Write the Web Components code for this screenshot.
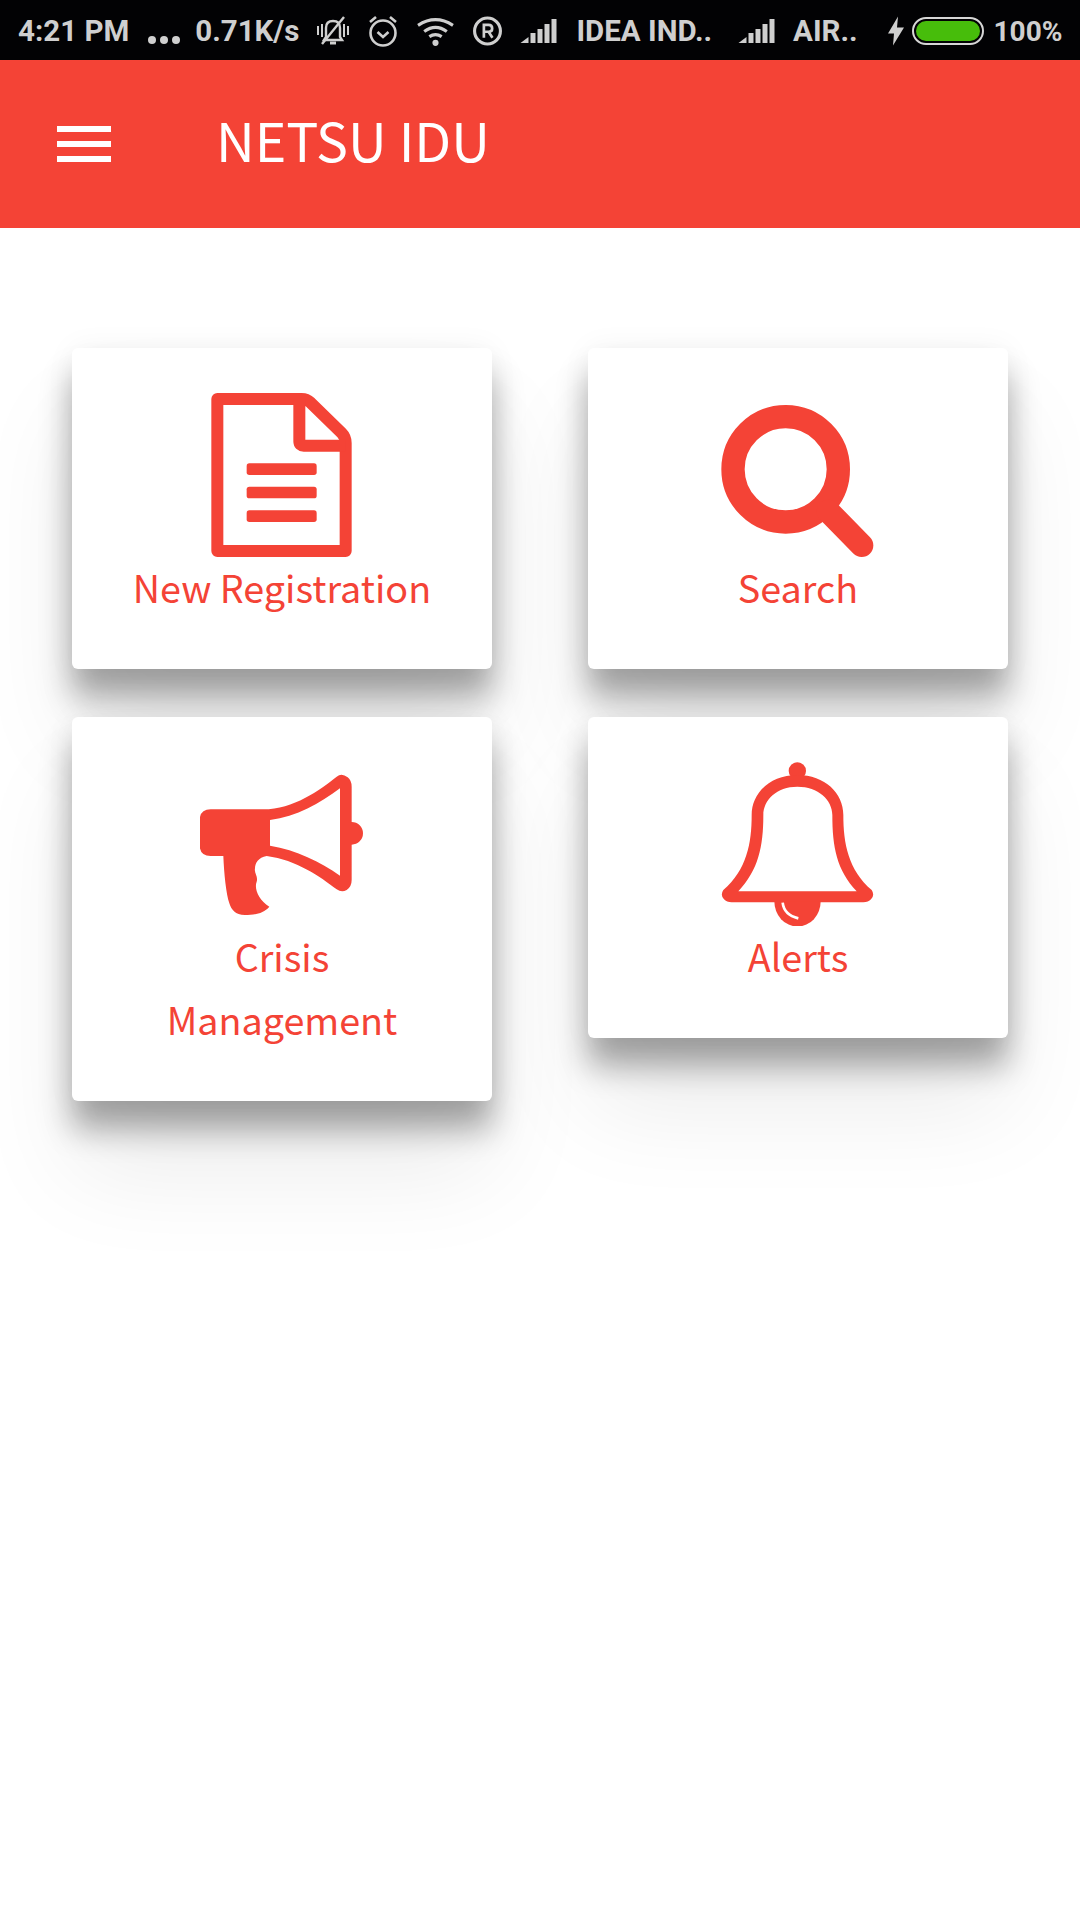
<!DOCTYPE html>
<html>
<head>
<meta charset="utf-8">
<title>Netsu Idu</title>
<style>
  html, body { margin: 0; background: #fff; }
</style>
</head>
<body>
<app-shell>
  <nav-card label="New Registration">
    <svg slot="icon" viewBox="450 190 492 492">
      <path d="M502 208H755Q770 208 782 219L875 310Q887 322 887 340V664H502Z" fill="none" stroke="#f44336" stroke-width="36" stroke-linejoin="round"/>
      <path d="M748 208V335Q748 348 761 348H887" fill="none" stroke="#f44336" stroke-width="36" stroke-linejoin="round"/>
      <rect x="590" y="401" width="210" height="35" rx="8" fill="#f44336"/>
      <rect x="590" y="471" width="210" height="35" rx="8" fill="#f44336"/>
      <rect x="590" y="542" width="210" height="35" rx="8" fill="#f44336"/>
    </svg>
  </nav-card>
  <nav-card label="Search">
    <svg slot="icon" viewBox="438 190 492 492">
      <circle cx="647" cy="419" r="158" fill="none" stroke="#f44336" stroke-width="70"/>
      <path d="M775 545L875 647" stroke="#f44336" stroke-width="70" stroke-linecap="round"/>
    </svg>
  </nav-card>
  <nav-card label="Crisis Management">
    <svg slot="icon" viewBox="450 186 492 492">
      <path fill="#f44336" fill-rule="evenodd" d="M482 328H640C730 328 810 270 860 230Q875 218 893 232Q905 242 905 260V366A34 34 0 0 1 905 434V540Q905 560 890 570Q875 578 860 568C810 530 740 480 650 468C625 472 615 490 615 505C612 520 625 530 620 545C612 565 625 600 658 620C640 642 610 645 585 645C555 645 545 630 538 610C528 580 522 520 520 468H482Q449 468 449 435V362Q449 328 482 328ZM660 360C740 350 810 310 870 265V527C810 485 740 450 660 437Z"/>
    </svg>
  </nav-card>
  <nav-card label="Alerts">
    <svg slot="icon" viewBox="438 186 492 492">
      <circle cx="682" cy="213" r="26" fill="#f44336"/>
      <path fill="#f44336" fill-rule="evenodd" d="M682 225C600 225 545 280 545 345C545 430 530 510 460 570Q450 585 462 598Q470 607 485 607H880Q895 607 903 598Q915 585 905 570C835 510 820 430 820 345C820 280 765 225 682 225ZM682 260C620 260 580 300 580 345C580 440 565 510 505 574H860C800 510 787 440 787 345C787 300 745 260 682 260Z"/>
      <path fill="#f44336" d="M613 604A69 75 0 0 0 752 604Z"/>
      <path d="M638 608Q642 645 685 655" fill="none" stroke="#fff" stroke-width="8"/>
    </svg>
  </nav-card>
</app-shell>

<script>
class StatusBar extends HTMLElement {
  constructor() {
    super();
    const shadow = this.attachShadow({ mode: 'open' });
    shadow.innerHTML = `
      <style>
        :host {
          display: flex;
          align-items: center;
          box-sizing: border-box;
          height: 60px;
          padding: 2px 0 0 18px;
          background: #020204;
          color: #cfcfcf;
          font: 700 29.5px Roboto, "Liberation Sans", sans-serif;
          white-space: nowrap;
        }
        svg { display: block; flex: none; }
        .pct { font-size: 28px; }
      </style>
      <span>4:21 PM</span>
      <svg style="margin:17px 0 0 19px" width="32" height="10" viewBox="0 0 32 10" fill="#cfcfcf">
        <circle cx="4" cy="5" r="4"/><circle cx="16" cy="5" r="4"/><circle cx="28" cy="5" r="4"/>
      </svg>
      <span style="margin-left:15px">0.71K/s</span>
      <svg style="margin-left:17px" width="34" height="32" viewBox="0 0 34 32" fill="none" stroke="#cfcfcf" stroke-width="2.4">
        <path d="M10 22V13Q10 6 17 6Q24 6 24 13V22L26 25H8Z"/>
        <path d="M14 28H20" stroke-width="3"/>
        <path d="M6 29L28 2"/>
        <path d="M2 11V20M6 9V22M28 9V22M32 11V20" stroke-width="2"/>
      </svg>
      <svg style="margin-left:17px" width="32" height="32" viewBox="0 0 30 32" fill="none" stroke="#cfcfcf" stroke-width="2.6">
        <circle cx="15" cy="18" r="12.5"/>
        <path d="M9.5 17L15 22L20.5 17"/>
        <path d="M2 7L8 2M28 7L22 2"/>
      </svg>
      <svg style="margin-left:18px" width="37" height="29" viewBox="0 0 36 28" fill="none" stroke="#cfcfcf" stroke-width="3">
        <path d="M1 8Q18 -3 35 8"/>
        <path d="M7 14Q18 6 29 14"/>
        <path d="M12 19Q18 15 24 19"/>
        <circle cx="18" cy="25" r="3" fill="#cfcfcf" stroke="none"/>
      </svg>
      <svg style="margin-left:19px" width="29" height="30" viewBox="0 0 28 29" fill="none" stroke="#cfcfcf" stroke-width="3">
        <circle cx="14" cy="14.5" r="12.5"/>
        <path d="M10.5 21V8.5H15Q18.5 8.5 18.5 12Q18.5 15.2 15 15.2H10.5M15 15.2L18.8 21" stroke-width="2.6"/>
      </svg>
      <svg style="margin-left:18px" width="37" height="26" viewBox="0 0 36 26" fill="#cfcfcf">
        <path d="M0 25L8 19V25Z"/>
        <rect x="10" y="15" width="5" height="10"/><rect x="17" y="11" width="5" height="14"/>
        <rect x="24" y="6" width="5" height="19"/><rect x="31" y="1" width="5" height="24"/>
      </svg>
      <span style="margin-left:19px">IDEA IND..</span>
      <svg style="margin-left:26px" width="37" height="26" viewBox="0 0 36 26" fill="#cfcfcf">
        <path d="M0 25L8 19V25Z"/>
        <rect x="10" y="15" width="5" height="10"/><rect x="17" y="11" width="5" height="14"/>
        <rect x="24" y="6" width="5" height="19"/><rect x="31" y="1" width="5" height="24"/>
      </svg>
      <span style="margin-left:18px">AIR..</span>
      <svg style="margin-left:30px" width="16" height="30" viewBox="0 0 16 29" fill="#cfcfcf">
        <path d="M10 0L0 17H6L5 29L16 11H9Z"/>
      </svg>
      <svg style="margin-left:8px" width="72" height="28" viewBox="0 0 72 28">
        <rect x="1" y="1" width="70" height="26" rx="13" fill="#020204" stroke="#d6d6d6" stroke-width="2"/>
        <rect x="4" y="4" width="64" height="20" rx="10" fill="#47bd0b"/>
      </svg>
      <span class="pct" style="margin-left:10px">100%</span>
    `;
  }
}

class AppHeader extends HTMLElement {
  constructor() {
    super();
    const shadow = this.attachShadow({ mode: 'open' });
    shadow.innerHTML = `
      <style>
        :host {
          display: flex;
          align-items: center;
          height: 168px;
          padding-left: 57px;
          background: #f44336;
          color: #fff;
        }
        .menu {
          display: flex;
          flex-direction: column;
          gap: 9px;
          width: 54px;
          margin-right: 105px;
        }
        .menu span { display: block; height: 6px; background: #fff; }
        h1 {
          margin: -12px 0 0;
          font: 400 53.6px "Noto Sans CJK SC", "Noto Sans", sans-serif;
        }
      </style>
      <div class="menu"><span></span><span></span><span></span></div>
      <h1><slot></slot></h1>
    `;
  }
}

class NavCard extends HTMLElement {
  constructor() {
    super();
    const shadow = this.attachShadow({ mode: 'open' });
    shadow.innerHTML = `
      <style>
        :host {
          display: flex;
          flex-direction: column;
          align-items: center;
          box-sizing: border-box;
          padding: 45px 52px 51px;
          background: #fff;
          border-radius: 6px;
          color: #f44336;
          text-align: center;
          font: 400 37.7px/63px "Noto Sans CJK SC", "Noto Sans", sans-serif;
          box-shadow: 0 28px 32px rgba(0,0,0,.33), 0 70px 100px rgba(0,0,0,.08), 0 0 30px rgba(0,0,0,.05);
        }
        ::slotted(svg) { display: block; width: 164px; height: 164px; }
        .label { margin-top: -2px; }
      </style>
      <slot name="icon"></slot>
      <div class="label"></div>
    `;
    shadow.querySelector('.label').textContent = this.getAttribute('label');
  }
}

class AppShell extends HTMLElement {
  constructor() {
    super();
    const shadow = this.attachShadow({ mode: 'open' });
    shadow.innerHTML = `
      <style>
        :host { display: block; height: 1920px; overflow: hidden; background: #fff; }
        main {
          display: grid;
          grid-template-columns: 420px 420px;
          column-gap: 96px;
          row-gap: 48px;
          align-items: start;
          padding: 120px 72px 0;
        }
      </style>
      <status-bar></status-bar>
      <app-header>NETSU IDU</app-header>
      <main><slot></slot></main>
    `;
  }
}

customElements.define('status-bar', StatusBar);
customElements.define('app-header', AppHeader);
customElements.define('nav-card', NavCard);
customElements.define('app-shell', AppShell);
</script>
</body>
</html>
